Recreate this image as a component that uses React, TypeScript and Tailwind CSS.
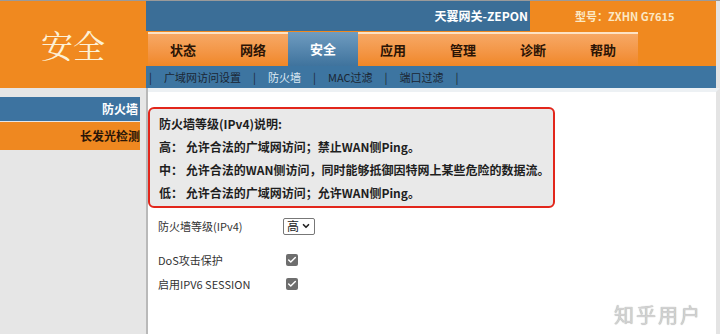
import { Check, ChevronDown } from "lucide-react";

const tabs = ["状态", "网络", "安全", "应用", "管理", "诊断", "帮助"];
const subLinks = ["广域网访问设置", "防火墙", "MAC过滤", "端口过滤"];

const cjk = { fontFamily: '"Noto Sans CJK SC", "DejaVu Sans", sans-serif' };

function Checked() {
  return (
    <span className="flex h-[12px] w-[12px] items-center justify-center rounded-[2px] bg-[#6e6e6e]">
      <Check size={10} strokeWidth={3.5} className="text-white" />
    </span>
  );
}

export default function App() {
  return (
    <div
      className="flex h-[334px] w-[720px] flex-col overflow-hidden bg-white text-[#222]"
      style={cjk}
    >
      {/* header */}
      <div className="flex h-[88px] border-t border-[#9a9a9a]">
        <div className="flex w-[146px] items-center justify-center bg-[#f0891f] pb-[2px]">
          <span
            className="text-[32px] leading-none text-[#fdf1d6]"
            style={{ fontFamily: '"Noto Serif CJK SC", "Noto Sans CJK SC", serif' }}
          >
            安全
          </span>
        </div>
        <div className="flex flex-1 flex-col border-r-4 border-[#e4e4e4]">
          <div className="flex h-[30px]">
            <div className="flex flex-1 items-center justify-end overflow-hidden bg-[#3b6e97] pr-[2px]">
              <span className="whitespace-nowrap text-[12px] font-bold text-white">
                天翼网关-ZEPON
              </span>
            </div>
            <div className="flex w-[186px] items-center bg-[#f0891f] pl-[45px]">
              <span className="whitespace-nowrap text-[11px] font-bold text-[#fbe8c4]">
                型号：ZXHN G7615
              </span>
            </div>
          </div>
          <div className="flex h-[36px] bg-[#f0891f]">
            <div className="flex pl-[2px] pt-[1px]">
              {tabs.map((t) => (
                <div
                  key={t}
                  className={
                    t === "安全"
                      ? "flex w-[70px] items-center justify-center bg-gradient-to-b from-[#6f9cc0] to-[#3f739d] text-[13px] font-bold text-white"
                      : "flex w-[70px] items-center justify-center border-t-2 border-[#fde3c6] bg-gradient-to-b from-[#f7a864] to-[#f08725] text-[13px] font-bold text-[#2b1405]"
                  }
                >
                  {t}
                </div>
              ))}
            </div>
          </div>
          <div className="flex h-[22px] items-center bg-[#3d75a1] pl-[3px] text-[11px] text-[#1b2633]">
            <span>|</span>
            {subLinks.map((s) => (
              <div key={s} className="flex items-center">
                <span
                  className={
                    s === "防火墙"
                      ? "px-[12px] text-[#dbe8f3]"
                      : "px-[12px]"
                  }
                >
                  {s}
                </span>
                <span>|</span>
              </div>
            ))}
          </div>
        </div>
      </div>

      {/* body */}
      <div className="flex flex-1">
        <div className="flex w-[148px] flex-col border-r-2 border-[#b9b9b9] bg-[#e6e6e6] pt-[9px]">
          <div className="mr-[6px] flex h-[24px] items-center justify-end bg-[#3d73a0] pr-[2px] text-[12px] font-bold text-white">
            防火墙
          </div>
          <div className="mr-[6px] mt-[1px] flex h-[28px] items-center justify-end overflow-hidden whitespace-nowrap bg-[#ef8820] text-[12px] font-bold text-[#2a1608]">
            长发光检测
          </div>
        </div>

        <div className="relative flex-1 border-r-4 border-t-4 border-[#e4e4e4] border-t-[#edf1f4]">
          <div className="pt-[15px]">
            <div className="flex h-[101px] w-[407px] flex-col justify-center gap-[6px] rounded-[6px] border-2 border-[#e2261b] bg-[#e9e9e9] pl-[9px] text-[12px] font-bold leading-[17px] text-[#1e1e1e]">
              <div>防火墙等级(IPv4)说明:</div>
              <div>高：&nbsp;允许合法的广域网访问；禁止WAN侧Ping。</div>
              <div>中：&nbsp;允许合法的WAN侧访问，同时能够抵御因特网上某些危险的数据流。</div>
              <div>低：&nbsp;允许合法的广域网访问；允许WAN侧Ping。</div>
            </div>
          </div>

          <div className="pl-[10px] pt-[9px] text-[11px] text-[#333]">
            <div className="flex h-[18px] items-center">
              <span className="w-[125px]">防火墙等级(IPv4)</span>
              <span className="flex h-[17px] items-center gap-[2px] rounded-[2px] border border-[#777] bg-white px-[3px] text-[12px] text-[#222]">
                高
                <ChevronDown size={10} strokeWidth={4} />
              </span>
            </div>
            <div className="mt-[16px] flex h-[18px] items-center">
              <span className="w-[128px]">DoS攻击保护</span>
              <Checked />
            </div>
            <div className="mt-[6px] flex h-[18px] items-center">
              <span className="w-[128px]">启用IPV6 SESSION</span>
              <Checked />
            </div>
          </div>

          <span className="absolute bottom-[4px] right-[14px] text-[20px] tracking-[2px] text-[#d2d2d2] [text-shadow:0_0_1px_#9a9a9a]">
            知乎用户
          </span>
        </div>
      </div>
    </div>
  );
}
